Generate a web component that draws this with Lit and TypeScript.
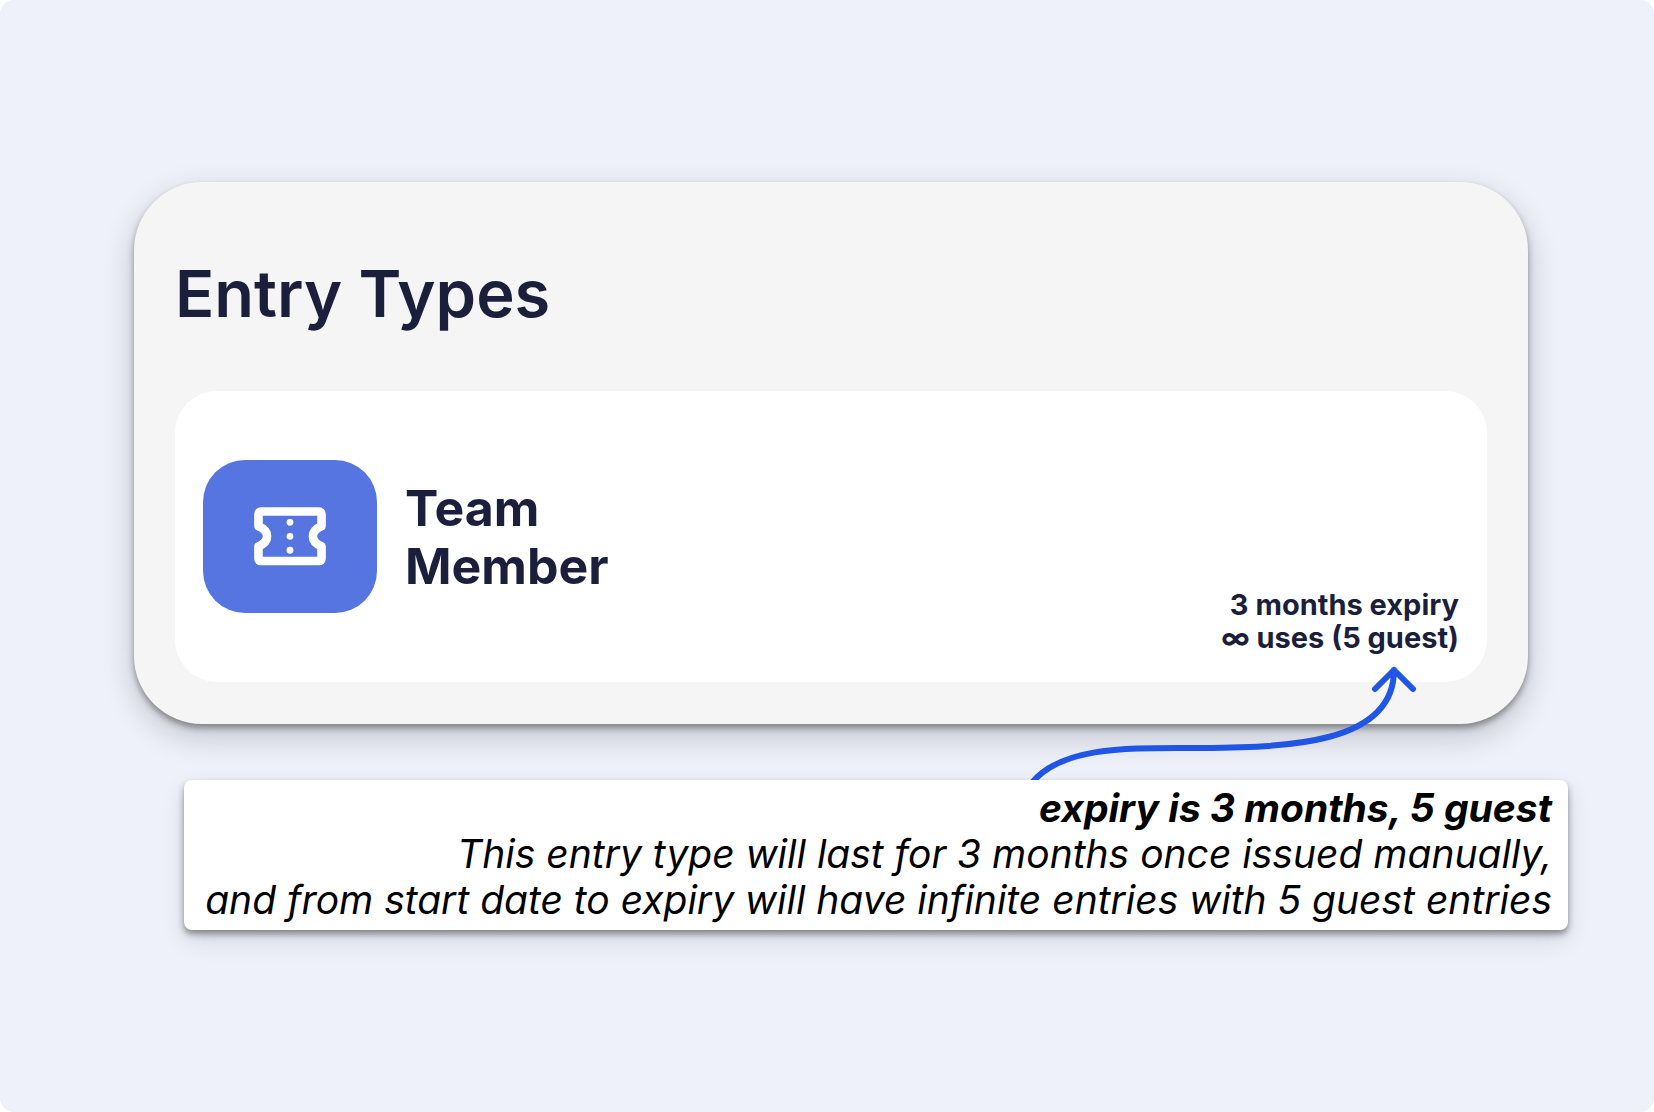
import { LitElement, html, css } from "lit";
import { customElement, property } from "lit/decorators.js";

@customElement("ticket-icon")
export class TicketIcon extends LitElement {
  static styles = css`
    :host {
      display: block;
      width: 86px;
      height: 86px;
    }
    .glyph {
      display: block;
      width: 100%;
      height: 100%;
    }
  `;

  render() {
    return html`
      <svg class="glyph" viewBox="0 0 24 24" aria-hidden="true">
        <path
          d="M3.9 4.9H20.1Q20.8 4.9 20.8 5.6V9C19.3 9.6 18.4 10.5 18.4 11.8C18.4 13.1 19.3 14 20.8 14.6V18Q20.8 18.7 20.1 18.7H3.9Q3.2 18.7 3.2 18V14.6C4.7 14 5.6 13.1 5.6 11.8C5.6 10.5 4.7 9.6 3.2 9V5.6Q3.2 4.9 3.9 4.9Z"
          fill="none"
          stroke="#fff"
          stroke-width="2.4"
          stroke-linejoin="round"
        />
        <circle cx="12" cy="7.9" r="0.95" fill="#fff" />
        <circle cx="12" cy="11.8" r="0.95" fill="#fff" />
        <circle cx="12" cy="15.7" r="0.95" fill="#fff" />
      </svg>
    `;
  }
}

@customElement("entry-type")
export class EntryType extends LitElement {
  @property() name = "";
  @property() expiry = "";
  @property() uses = "";

  static styles = css`
    :host {
      display: flex;
      align-items: center;
      gap: 28px;
      box-sizing: border-box;
      min-height: 291px;
      padding: 28px;
      border-radius: 42px;
      background: #fff;
    }
    .tile {
      display: flex;
      align-items: center;
      justify-content: center;
      flex: none;
      width: 174px;
      height: 153px;
      border-radius: 42px;
      background: #5675e0;
    }
    .name {
      margin: 0;
      width: min-content;
      font-size: 50px;
      line-height: 58px;
      font-weight: 700;
    }
    .meta {
      margin: 0 0 0 auto;
      align-self: flex-end;
      text-align: right;
      font-size: 29px;
      line-height: 33px;
      font-weight: 700;
    }
    .line {
      display: block;
    }
  `;

  render() {
    return html`
      <span class="tile"><ticket-icon></ticket-icon></span>
      <h2 class="name">${this.name}</h2>
      <p class="meta">
        <span class="line">${this.expiry}</span>
        <span class="line">${this.uses}</span>
      </p>
    `;
  }
}

@customElement("app-root")
export class AppRoot extends LitElement {
  static styles = css`
    :host {
      display: block;
      font-family: Inter, "Open Sans", sans-serif;
      color: #1c1f3b;
      background: #fff;
    }
    .page {
      display: flex;
      flex-direction: column;
      justify-content: center;
      gap: 56px;
      box-sizing: border-box;
      min-height: 100vh;
      padding: 40px 86px 40px 134px;
      border-radius: 14px;
      background: #eef1fa;
    }
    .panel {
      margin-right: 40px;
      padding: 72px 41px 42px;
      border-radius: 68px;
      background: #f5f5f5;
      box-shadow:
        0 4px 6px rgba(0, 0, 0, 0.36),
        0 12px 32px rgba(0, 0, 0, 0.2);
    }
    .title {
      margin: 0 0 57px;
      font-size: 65px;
      line-height: 80px;
      font-weight: 600;
    }
    .note {
      position: relative;
      margin-left: 50px;
      padding: 5px 16px 7px;
      border-radius: 8px;
      background: #fff;
      color: #000;
      text-align: right;
      font-size: 39px;
      line-height: 46px;
      font-style: italic;
      box-shadow:
        0 4px 6px rgba(0, 0, 0, 0.4),
        0 10px 24px rgba(0, 0, 0, 0.12);
    }
    .text {
      margin: 0;
    }
    .lead {
      font-weight: 700;
    }
    .arrow {
      position: absolute;
      right: 144px;
      bottom: 100%;
      width: 400px;
      height: 120px;
      overflow: hidden;
    }
  `;

  render() {
    return html`
      <main class="page">
        <section class="panel">
          <h1 class="title">Entry Types</h1>
          <entry-type
            name="Team Member"
            expiry="3 months expiry"
            uses="∞ uses (5 guest)"
          ></entry-type>
        </section>
        <aside class="note">
          <svg class="arrow" viewBox="0 0 400 120" aria-hidden="true">
            <path
              d="M7 124C36 86 106 88 166 88C266 88 370 84 370 10M351 29L370 10L389 29"
              fill="none"
              stroke="#2055e5"
              stroke-width="6"
              stroke-linecap="round"
              stroke-linejoin="round"
            />
          </svg>
          <p class="text lead">expiry is 3 months, 5 guest</p>
          <p class="text">
            This entry type will last for 3 months once issued manually,<br />
            and from start date to expiry will have infinite entries with 5 guest entries
          </p>
        </aside>
      </main>
    `;
  }
}
